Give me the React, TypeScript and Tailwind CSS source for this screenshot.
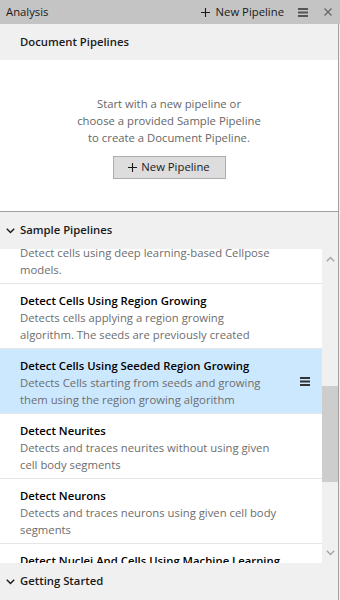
import React from 'react';

type Pipeline = {
  title: string;
  description: string;
  selected?: boolean;
};

const pipelines: Pipeline[] = [
  {
    title: 'Detect Cells Using Cellpose',
    description: 'Detect cells using deep learning-based Cellpose models.',
  },
  {
    title: 'Detect Cells Using Region Growing',
    description:
      'Detects cells applying a region growing algorithm. The seeds are previously created using a threshold.',
  },
  {
    title: 'Detect Cells Using Seeded Region Growing',
    description: 'Detects Cells starting from seeds and growing them using the region growing algorithm',
    selected: true,
  },
  {
    title: 'Detect Neurites',
    description: 'Detects and traces neurites without using given cell body segments',
  },
  {
    title: 'Detect Neurons',
    description: 'Detects and traces neurons using given cell body segments',
  },
  {
    title: 'Detect Nuclei And Cells Using Machine Learning',
    description: 'Detects nuclei and cells using a trained pixel classifier',
  },
];

function Chevron({ up = false }: { up?: boolean }) {
  return (
    <svg width="9" height="6" viewBox="0 0 9 6" className={up ? 'shrink-0 rotate-180' : 'shrink-0'}>
      <path d="M0.8 0.8 L4.5 4.6 L8.2 0.8" fill="none" stroke="currentColor" strokeWidth="1.4" />
    </svg>
  );
}

function Burger({ className = '' }: { className?: string }) {
  return (
    <svg width="10" height="9" viewBox="0 0 10 9" className={className}>
      <rect x="0" y="0" width="10" height="2" fill="currentColor" />
      <rect x="0" y="3.5" width="10" height="2" fill="currentColor" />
      <rect x="0" y="7" width="10" height="2" fill="currentColor" />
    </svg>
  );
}

function Plus({ size = 9 }: { size?: number }) {
  return (
    <svg width={size} height={size} viewBox="0 0 10 10" className="shrink-0">
      <path d="M5 0 V10 M0 5 H10" stroke="currentColor" strokeWidth="1.2" />
    </svg>
  );
}

export default function App() {
  return (
    <div
      className="flex h-[600px] w-[340px] flex-col overflow-hidden bg-[#f0f0f0] text-[11.3px] text-[#1a1a1a]"
      style={{ fontFamily: '"Segoe UI", "Open Sans", "Noto Sans", sans-serif' }}
    >
      {/* title bar */}
      <div className="flex h-[24px] shrink-0 items-center bg-[#c4c4c4] pl-[6px] pr-[8px]">
        <span className="flex-1">Analysis</span>
        <button className="flex items-center gap-[6px] text-[#1a1a1a]" type="button">
          <Plus />
          <span>New Pipeline</span>
        </button>
        <Burger className="ml-[14px] text-[#555]" />
        <svg width="8" height="8" viewBox="0 0 8 8" className="ml-[16px] text-[#6b6b6b]">
          <path d="M0.5 0.5 L7.5 7.5 M7.5 0.5 L0.5 7.5" stroke="currentColor" strokeWidth="1.4" />
        </svg>
      </div>

      <div className="flex flex-1 flex-col">
        <div className="flex w-[339px] flex-1 flex-col border-r border-[#a0a0a0]">
          <div className="flex h-[36px] items-center pl-[20px] font-semibold">Document Pipelines</div>

          <div className="flex h-[152px] flex-col items-center border-b border-[#a0a0a0] bg-white pt-[35px]">
            <p className="text-center leading-[17px] text-[#666]">
              Start with a new pipeline or
              <br />
              choose a provided Sample Pipeline
              <br />
              to create a Document Pipeline.
            </p>
            <button
              className="mt-[10px] flex h-[23px] w-[113px] items-center justify-center gap-[4px] border border-[#adadad] bg-[#dddddd] text-[#1a1a1a]"
              type="button"
            >
              <Plus />
              <span>New Pipeline</span>
            </button>
          </div>

          <div className="flex h-[37px] items-center gap-[5px] pl-[6px] font-semibold">
            <Chevron />
            <span>Sample Pipelines</span>
          </div>

          <div className="flex h-[314px]">
            <div className="w-[322px] overflow-hidden bg-white">
              <div className="mt-[-30px]">
                {pipelines.map((p) => (
                  <div
                    key={p.title}
                    className={`flex h-[65px] items-center border-b border-[#e6e6e6] ${
                      p.selected ? 'bg-[#cce8ff]' : 'bg-white'
                    }`}
                  >
                    <div className="h-[64px] min-w-0 flex-1 overflow-hidden pl-[20px] pt-[8px]">
                      <div className="whitespace-nowrap font-semibold leading-[17px] text-black">{p.title}</div>
                      <div className="w-[259px] leading-[17px] text-[#6d6d6d]">{p.description}</div>
                    </div>
                    {p.selected && <Burger className="mr-[12px] shrink-0 text-[#333]" />}
                  </div>
                ))}
              </div>
            </div>

            <div className="flex w-[16px] flex-col items-center text-[#a6a6a6]">
              <div className="flex h-[137px] w-full justify-center pt-[7px]">
                <Chevron up />
              </div>
              <div className="h-[96px] w-full bg-[#cdcdcd]" />
              <div className="flex flex-1 items-end justify-center pb-[7px]">
                <Chevron />
              </div>
            </div>
          </div>

          <div className="flex h-[37px] items-center gap-[5px] pl-[6px] font-semibold">
            <Chevron />
            <span>Getting Started</span>
          </div>
        </div>
      </div>
    </div>
  );
}
